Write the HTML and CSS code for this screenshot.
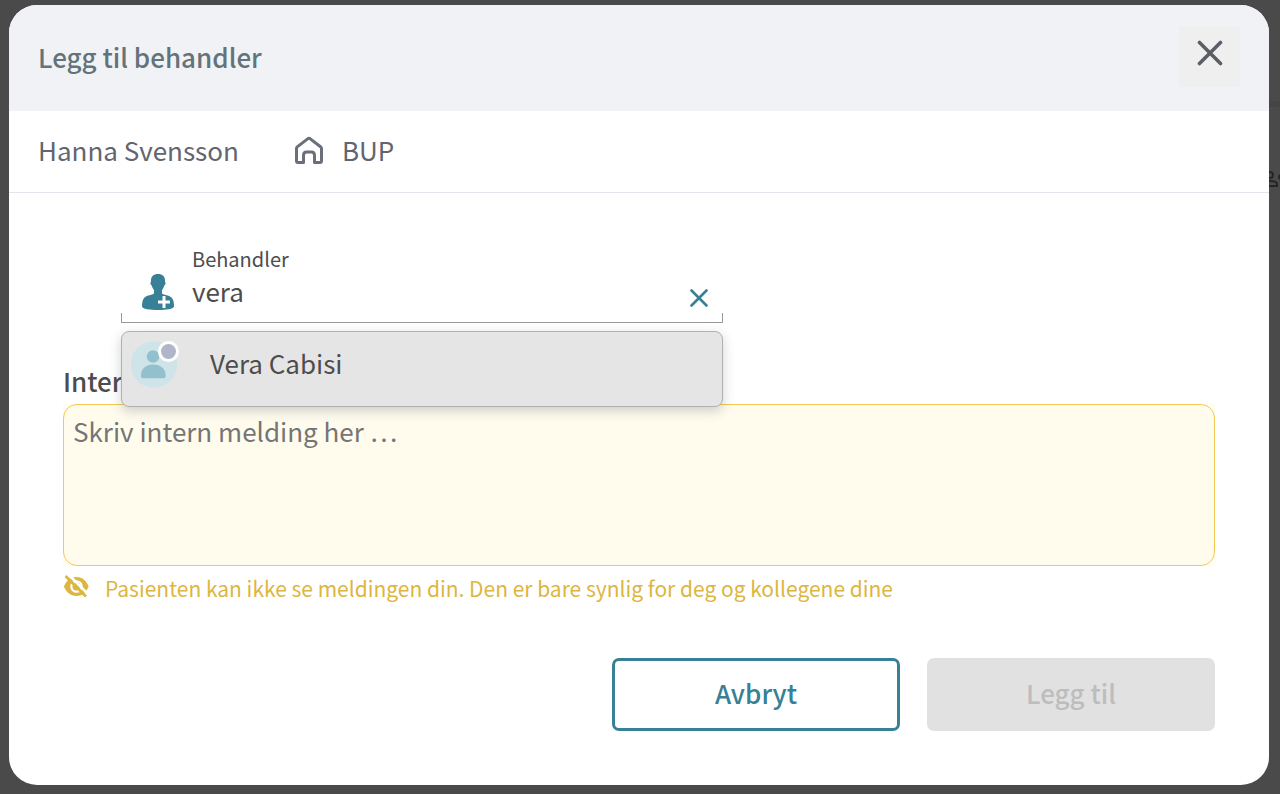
FILE: index.html
```html
<!DOCTYPE html>
<html lang="no">
<head>
    <meta charset="UTF-8">
    <meta name="viewport" content="width=device-width, initial-scale=1">
    <title>Legg til behandler</title>
    <link rel="stylesheet" href="styles.css">
</head>
<body>
    <!-- page behind the dialog -->
    <div class="backdrop" aria-hidden="true">
        <div class="backdrop-bar"></div>
        <svg class="backdrop-icon" width="24" height="18" viewBox="0 0 24 18" fill="none" stroke="#25262a" stroke-width="2">
            <circle cx="6" cy="4" r="3"/>
            <path d="M0 15v-2c0-2 2-3 6-3 5 0 7 1 7 3v2z"/>
            <circle cx="17" cy="6" r="2"/>
        </svg>
    </div>

    <div class="modal" role="dialog" aria-modal="true" aria-labelledby="modalTitle">
        <header class="modal-header">
            <h1 id="modalTitle">Legg til behandler</h1>
            <button type="button" class="close-button" aria-label="Lukk">
                <svg width="26" height="26" viewBox="0 0 26 26" fill="none" stroke="#5c5e66" stroke-width="3.6" stroke-linecap="round">
                    <path d="M2.500 2.500l21 21M23.500 2.500l-21 21"/>
                </svg>
            </button>
        </header>

        <div class="patient-bar">
            <span>Hanna Svensson</span>
            <span class="unit">
                <svg width="30" height="28" viewBox="0 0 30 28" fill="none" stroke="#6b6f7b" stroke-width="3" stroke-linejoin="round">
                    <path d="M2.500 12.500Q2.500 11.500 3.500 10.700L14 2.600Q15 1.900 16 2.600L26.500 10.700Q27.500 11.500 27.500 12.500V25Q27.500 26.500 26 26.500H20.500V19.500Q20.500 16 17.500 16H12.500Q9.500 16 9.500 19.500V26.500H4Q2.500 26.500 2.500 25Z"/>
                </svg>
                BUP
            </span>
        </div>

        <form class="modal-body">
            <div class="search">
                <div class="search-field">
                    <svg class="person-icon" width="32" height="36" viewBox="0 0 32 36">
                        <path fill="#388095" d="M16 0c4.500 0 7 2.500 7 6.500 0 1.200 0 1.600.5 2.200.5 1-.5 2.300-1.200 2.800-.6 2.200-1.600 3.500-2.300 4.500v3.500c1.500 1.500 7 1.500 9.500 4 2 2 2.500 5 2.500 9 0 2.500-8 3.500-16 3.500S0 35 0 32.500c0-4 .5-7 2.500-9 2.500-2.500 8-2.500 9.500-4V16c-.7-1-1.700-2.300-2.300-4.500C9 11 8 9.700 8.500 8.700 9 8.100 9 7.700 9 6.500 9 2.500 11.500 0 16 0z"/>
                        <path stroke="#fff" stroke-width="3" d="M22 22v12M16 28h12"/>
                    </svg>
                    <div class="search-text">
                        <label for="therapist">Behandler</label>
                        <input type="text" id="therapist" value="vera" autocomplete="off">
                    </div>
                    <button type="button" class="clear-button" aria-label="Tøm">
                        <svg width="18" height="18" viewBox="0 0 18 18" fill="none" stroke="#388095" stroke-width="2.600" stroke-linecap="round">
                            <path d="M1.500 1.500l15 15M16.500 1.500l-15 15"/>
                        </svg>
                    </button>
                </div>
                <ul class="suggestions">
                    <li>
                        <svg width="48" height="48" viewBox="0 0 48 48">
                            <circle cx="23" cy="23.500" r="23.200" fill="#cee4e9"/>
                            <circle cx="22" cy="15.500" r="6.200" fill="#92c0cc"/>
                            <path fill="#92c0cc" d="M10 34.500c0-7 5-11 12.300-11s12.300 4 12.300 11v1q0 1.800-1.800 1.800H11.800Q10 37.300 10 35.500z"/>
                            <circle cx="37.500" cy="10.500" r="10.500" fill="#fff"/>
                            <circle cx="37.500" cy="10.500" r="7.500" fill="#b0b6c7"/>
                        </svg>
                        <span>Vera Cabisi</span>
                    </li>
                </ul>
            </div>

            <div class="message">
                <label for="message">Intern</label>
                <div class="message-box">
                    <textarea id="message" placeholder="Skriv intern melding her …"></textarea>
                </div>
                <p class="note">
                    <svg width="26" height="26" viewBox="0 0 26 26">
                        <path fill="#dcb63f" d="M13.500 3c6 0 10 4 12 9.500-2 5.500-6 9.500-12 9.500s-10.500-4-12.500-9.500C3 7 7.500 3 13.500 3z"/>
                        <circle cx="13.500" cy="12.500" r="6.300" fill="#fff"/>
                        <circle cx="13.500" cy="12.500" r="4" fill="#dcb63f"/>
                        <path stroke="#fff" stroke-width="2.600" d="M4.500-.5l22 22"/>
                        <path stroke="#dcb63f" stroke-width="2.600" d="M2.500 2l20.500 20.500"/>
                    </svg>
                    Pasienten kan ikke se meldingen din. Den er bare synlig for deg og kollegene dine
                </p>
            </div>

            <div class="actions">
                <button type="button" class="button cancel">Avbryt</button>
                <button type="submit" class="button submit" disabled>Legg til</button>
            </div>
        </form>
    </div>
</body>
</html>
```
FILE: styles.css
```css
* {
    box-sizing: border-box;
}

body {
    margin: 0;
    padding: 5px 11px 9px 9px;
    min-height: 100vh;
    display: flex;
    background-color: #4a4a4a;
    color: #4d4d4d;
    font-family: "Noto Sans CJK SC", "Noto Sans", sans-serif;
    font-size: 26px;
    line-height: 36px;
}

h1, p, ul {
    margin: 0;
    padding: 0;
}

button, input, textarea {
    font: inherit;
    margin: 0;
}

svg {
    display: block;
    flex: none;
}

.backdrop {
    position: absolute;
    top: 0;
    right: 0;
    width: 12px;
    height: 100%;
    overflow: hidden;
}

.backdrop-bar {
    margin-top: 101px;
    height: 6px;
    background-color: #454545;
}

.backdrop-icon {
    margin-top: 64px;
    margin-left: -4px;
}

.modal {
    position: relative;
    flex: 1;
    display: flex;
    flex-direction: column;
    overflow: hidden;
    border-radius: 28px;
    background-color: white;
}

.modal-header {
    display: flex;
    justify-content: space-between;
    align-items: center;
    height: 106px;
    padding: 0 29px 3px;
    background-color: #f1f2f6;
}

h1 {
    color: #647279;
    font-size: 26px;
    font-weight: 500;
}

.close-button {
    display: flex;
    justify-content: center;
    width: 61px;
    height: 61px;
    padding: 14px 0;
    border: none;
    background-color: #efefef;
    cursor: pointer;
}

.patient-bar {
    display: flex;
    align-items: center;
    gap: 55px;
    height: 82px;
    padding: 0 29px 4px;
    border-bottom: 1px solid #e2e4ee;
    color: #62656f;
}

.unit {
    display: flex;
    align-items: center;
    gap: 18px;
}

.modal-body {
    padding: 55px 54px 54px;
}

.search {
    position: relative;
    width: 602px;
    max-width: 100%;
    margin-left: 58px;
}

.search-field {
    display: flex;
    align-items: flex-end;
    height: 75px;
    padding: 0 15px 12px 21px;
    background: linear-gradient(#999, #999) left bottom / 1px 9px no-repeat,
        linear-gradient(#999, #999) right bottom / 1px 9px no-repeat;
    border-bottom: 1px solid #999;
}

.search-text {
    flex: 1;
    display: flex;
    flex-direction: column;
    padding: 0 0 1px 18px;
}

.search-text label {
    font-size: 20px;
    line-height: 28px;
}

.search-text input {
    width: 100%;
    height: 36px;
    padding: 0;
    border: none;
    outline: none;
    background: none;
    color: #4d4d4d;
}

.clear-button {
    padding: 3px 0;
    border: none;
    background: none;
    cursor: pointer;
}

.suggestions {
    position: absolute;
    top: 83px;
    left: 0;
    right: 0;
    z-index: 1;
    list-style: none;
    border: 1px solid #b0b0b0;
    border-radius: 8px;
    background-color: #e5e5e5;
    box-shadow: 0 4px 12px rgba(60, 70, 90, 0.25);
}

.suggestions li {
    display: flex;
    gap: 31px;
    height: 74px;
    padding: 9px;
}

.suggestions span {
    padding-top: 4px;
}

.message {
    margin-top: 40px;
}

.message label {
    display: block;
    height: 41px;
    font-weight: 500;
}

.message-box {
    background-color: #fffdf2;
}

textarea {
    display: block;
    width: 100%;
    height: 162px;
    padding: 8px 9px;
    border: 1px solid #f3c94f;
    border-radius: 14px;
    outline: none;
    resize: none;
    background-color: #fffcee;
    color: #4d4d4d;
}

textarea::placeholder {
    color: #757575;
    opacity: 1;
}

.note {
    display: flex;
    gap: 16px;
    padding-top: 8px;
    color: #dcb63f;
    font-size: 21px;
    line-height: 28px;
}

.actions {
    display: flex;
    justify-content: flex-end;
    gap: 27px;
    margin-top: 56px;
}

.button {
    width: 288px;
    height: 73px;
    padding: 0 0 4px;
    border: none;
    border-radius: 7px;
    font-weight: 500;
}

.cancel {
    border: 3px solid #388095;
    background-color: white;
    color: #388095;
    cursor: pointer;
}

.submit {
    background-color: #e1e1e1;
    color: #bdbdbd;
}
```
